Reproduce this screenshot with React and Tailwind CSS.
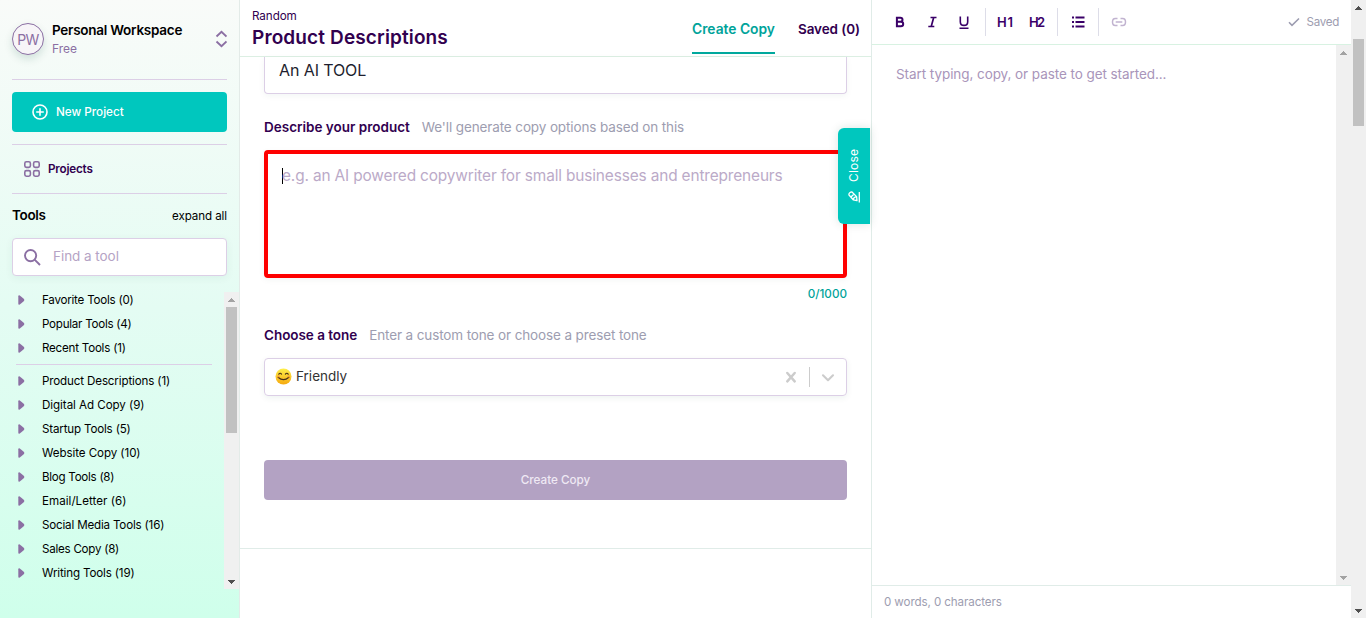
import React from "react";

const favorites = [
  ["Favorite Tools (0)", "pt-0.5 tracking-[-0.23px]"],
  ["Popular Tools (4)", "pt-0.5 tracking-[-0.25px]"],
  ["Recent Tools (1)", "pt-0.5 tracking-[-0.22px]"],
];

const categories = [
  ["Product Descriptions (1)", "pt-0.5 tracking-[-0.14px]"],
  ["Digital Ad Copy (9)", "pt-0.5 tracking-[-0.06px]"],
  ["Startup Tools (5)", "pt-0.5 tracking-[-0.17px]"],
  ["Website Copy (10)", "pt-0.5 tracking-[-0.08px]"],
  ["Blog Tools (8)", "pt-0.5 tracking-[-0.27px]"],
  ["Email/Letter (6)", "pt-0.5 tracking-[0.03px]"],
  ["Social Media Tools (16)", "pt-0.5 tracking-[-0.18px]"],
  ["Sales Copy (8)", "pt-0.5 tracking-[-0.25px]"],
  ["Writing Tools (19)", "pt-0.5 tracking-[-0.15px]"],
];

function ToolRow({ label, tracking }) {
  return (
    <li className="flex h-6 items-center pl-[18px] text-[11.6px] text-black">
      <svg className="mr-[17px] h-[10px] w-[7px]" viewBox="0 0 7 10">
        <path d="M0.3 1.2Q0.3 0 1.8 0.5L6 4Q6.6 5 6 6L1.8 9.5Q0.3 10 0.3 8.8Z" fill="#8b6fa3" />
      </svg>
      <span className={tracking}>{label}</span>
    </li>
  );
}

function Arrow({ up, color }) {
  return (
    <svg className="h-[15px] w-[15px] shrink-0" viewBox="0 0 15 15" shapeRendering="crispEdges">
      <path d={up ? "M4 10h7v-1h-1v-1h-1v-1h-1v-1h-1v1h-1v1h-1v1h-1z" : "M4 6h7v1h-1v1h-1v1h-1v1h-1v-1h-1v-1h-1v-1h-1z"} fill={color} />
    </svg>
  );
}

function Sidebar() {
  return (
    <aside className="flex w-60 shrink-0 flex-col border-r border-[#e3ebe8] bg-linear-to-b from-[#f9fbf9] via-[#e4fcf3] to-[#cfffeb]">
      <div className="mx-3 flex h-20 items-center border-b border-[#dccfe6] pb-px">
        <div className="flex h-8 w-8 items-center justify-center rounded-full border border-[#8b6fa3] bg-[#f7f5f8] text-[14px] tracking-[-0.5px] text-[#8b6fa3] shadow-[0_4px_8px_rgba(0,80,60,0.15)]">PW</div>
        <div className="ml-2 flex-1">
          <div className="text-[13.5px] leading-[18px] font-semibold tracking-[-0.25px] text-black">Personal Workspace</div>
          <div className="-mb-px pt-px text-[12px] leading-[18px] text-[#8b6fa3]">Free</div>
        </div>
        <svg className="h-[18px] w-3" viewBox="0 0 12 18" fill="none" stroke="#8b6fa3" strokeWidth="1.9">
          <path d="M1.5 6.5 6.500 1.9 11.500 6.5M1.5 11.5 6.500 16.1 11.500 11.5" />
        </svg>
      </div>
      <button className="mx-3 mt-3 flex h-10 items-center rounded bg-[#00c7be] pl-5 text-[11.7px] font-medium text-white">
        <svg className="mr-2 h-4 w-4" viewBox="0 0 16 16" fill="none" stroke="white" strokeWidth="1.6">
          <circle cx="8" cy="8" r="7" />
          <path d="M8 4.2v7.6M4.2 8h7.6" />
        </svg>
        <span className="pt-0.5">New Project</span>
      </button>
      <div className="mx-3 mt-3 flex h-[50px] items-center border-y border-[#dccfe6] pl-3 text-[11.7px] font-semibold tracking-[-0.2px] text-[#31004f]">
        <svg className="mr-2 h-4 w-4" viewBox="0 0 16 16" fill="none" stroke="#8b6fa3" strokeWidth="1.6">
          <rect x="0.8" y="0.8" width="5.6" height="5.6" rx="1.6" />
          <rect x="9.6" y="0.8" width="5.6" height="5.6" rx="1.6" />
          <rect x="0.8" y="9.6" width="5.6" height="5.6" rx="1.6" />
          <rect x="9.6" y="9.6" width="5.6" height="5.6" rx="1.6" />
        </svg>
        <span className="pt-0.5">Projects</span>
      </div>
      <div className="mx-3 flex h-11 items-center justify-between text-black">
        <span className="pb-0.5 text-[13.5px] font-semibold tracking-[-0.35px]">Tools</span>
        <span className="pt-0.5 text-[11.6px] tracking-[-0.1px]">expand all</span>
      </div>
      <div className="mx-3 flex h-[38px] shrink-0 items-center rounded border border-[#dccfe6] bg-white pl-[11px] text-[13.5px] tracking-[-0.05px] text-[#b5a3c5] shadow-[0_2px_8px_rgba(0,80,60,0.06)]">
        <svg className="mr-3 h-[17px] w-[17px]" viewBox="0 0 17 17" fill="none" stroke="#8b6fa3" strokeWidth="1.9">
          <circle cx="6.6" cy="6.6" r="5.6" />
          <path d="M10.6 10.6 16 16" />
        </svg>
        <span className="pb-0.5">Find a tool</span>
      </div>
      <div className="mt-4 flex h-[297px]">
        <div className="w-[224px] overflow-hidden">
          <ul className="-mt-1">
            <li><ul>{favorites.map(([l, t]) => <ToolRow key={l} label={l} tracking={t} />)}</ul></li>
            <li className="mt-1 mr-3 mb-1 ml-4 h-px bg-[#dccfe6]" />
            <li><ul>{categories.map(([l, t]) => <ToolRow key={l} label={l} tracking={t} />)}</ul></li>
          </ul>
        </div>
        <div className="flex w-[15px] flex-col justify-between bg-[#f0f0f0]">
          <Arrow up color="#a3a3a3" />
          <div className="mx-auto mb-auto h-[126px] w-[11px] bg-[#c1c1c1]" />
          <Arrow color="#505050" />
        </div>
      </div>
    </aside>
  );
}

function Main() {
  return (
    <main className="relative w-[632px] shrink-0 border-r border-[#e0ece8]">
      <header className="flex h-[57px] justify-between border-b border-[#dcefe3] px-3">
        <div className="pt-2 text-[#31004f]">
          <div className="text-[11.7px] leading-4 tracking-[-0.1px]">Random</div>
          <h1 className="text-[19px] leading-7 font-semibold tracking-[0.13px]">Product Descriptions</h1>
        </div>
        <nav className="flex h-[54px] gap-[23px] font-semibold">
          <div className="flex h-[54px] w-[83px] items-center border-b-2 border-[#00a89d] pt-1.5 text-[13.8px] text-[#00a39a]"><span className="whitespace-nowrap">Create Copy</span></div>
          <div className="flex h-[54px] w-[61px] items-center pt-1 text-[13.5px] tracking-[-0.1px] text-[#31004f]"><span className="whitespace-nowrap">Saved (0)</span></div>
        </nav>
      </header>
      <div className="flex h-[492px] flex-col border-b border-[#e0ece8] px-6">
        <div className="flex h-[37px] shrink-0 rounded-b border border-t-0 border-[#dccfe6] pl-[14px] text-[16px] leading-[27px] tracking-[-0.1px] text-[#1e1e2e] shadow-[0_2px_6px_rgba(0,80,60,0.05)]"><span>An AI TOOL</span></div>
        <div className="mt-[23px] flex h-5 items-center gap-3 text-[13.5px]">
          <span className="font-semibold text-[#31004f]">Describe your product</span>
          <span className="tracking-[-0.12px] text-[#9d9db0]">We'll generate copy options based on this</span>
        </div>
        <div className="mt-[13px] flex h-32 shrink-0 rounded border-4 border-[#fe0000] pt-3 pl-[14px] text-[15.4px] tracking-[-0.135px] text-[#bbaac8] shadow-[0_2px_6px_rgba(0,80,60,0.05)]">
          <span className="mt-0.5 -mr-px h-4 w-px bg-black" />
          <span className="h-6 leading-[19px]">e.g. an AI powered copywriter for small businesses and entrepreneurs</span>
        </div>
        <div className="mt-[9px] flex h-4 items-center justify-end text-[11.7px] font-medium text-[#00a39a]"><span>0/1000</span></div>
        <div className="mt-[22px] flex h-5 items-center gap-3 text-[13.5px]">
          <span className="font-semibold tracking-[-0.04px] text-[#31004f]">Choose a tone</span>
          <span className="tracking-[-0.125px] text-[#9d9db0]">Enter a custom tone or choose a preset tone</span>
        </div>
        <div className="mt-[13px] flex h-[38px] shrink-0 items-center rounded border border-[#dccfe6] pl-[10px] text-[13.5px] text-[#333] shadow-[0_2px_6px_rgba(0,80,60,0.07)]">
          <svg className="mr-1 mb-px h-[17px] w-[17px]" viewBox="0 0 17 17" fill="none" strokeLinecap="round">
            <defs>
              <linearGradient id="face" x1="0" y1="0" x2="0" y2="1">
                <stop offset="0" stopColor="#fff04b" />
                <stop offset="1" stopColor="#f5a90f" />
              </linearGradient>
            </defs>
            <circle cx="8.5" cy="8.5" r="8" fill="url(#face)" />
            <path d="M3.8 6.2Q5.2 4.4 6.5 6.1M10.4 6.1Q11.8 4.4 13.2 6.2M3.1 9.3Q8.5 14 13.9 9.3" stroke="#493018" strokeWidth="1.2" />
            <circle cx="3.3" cy="8.5" r="1.3" fill="#ff8b34" opacity=".5" />
            <circle cx="13.7" cy="8.5" r="1.3" fill="#ff8b34" opacity=".5" />
          </svg>
          <span className="flex-1 pb-0.5">Friendly</span>
          <svg className="h-5 w-5" viewBox="0 0 20 20" fill="none" stroke="#ccc" strokeWidth="2.5" strokeLinecap="round">
            <path d="M6.3 6 13.7 14.4M13.7 6 6.3 14.4" />
          </svg>
          <div className="mx-2 h-5 w-px bg-[#ccc]" />
          <svg className="mr-2 h-5 w-5" viewBox="0 0 20 20" fill="none" stroke="#ccc" strokeWidth="2.1" strokeLinecap="round" strokeLinejoin="round">
            <path d="m5 8.3 5 4.9 5-4.9" />
          </svg>
        </div>
        <button className="mt-16 flex h-10 shrink-0 items-center justify-center rounded bg-[#b3a2c3] text-[11.7px] font-medium text-[#efe9f4]"><span className="pt-0.5">Create Copy</span></button>
      </div>
      <button className="absolute top-32 left-[598px] flex h-24 w-8 flex-col items-center rounded-l-md bg-[#00c7be] text-white shadow-[0_0_10px_rgba(0,80,60,0.15)]">
        <span className="mt-5 flex h-[34px] w-4 rotate-180 items-center text-[12px] tracking-[0.2px] [writing-mode:vertical-rl]">Close</span>
        <svg className="mt-[9px] h-3 w-3" viewBox="0 0 12 12" fill="none" stroke="white" strokeWidth="1.3" strokeLinejoin="round">
          <path d="M1 4Q0.600 2.800 1.800 1.800T4 1L8.600 5.600 9 9.600 5.200 8.800ZM3.200 5.800 5.800 3.200M5.200 8.800Q5.400 6 8.600 5.600M11.300 1v10.500" />
        </svg>
      </button>
    </main>
  );
}

function Editor() {
  return (
    <section className="flex w-[479px] flex-col">
      <div className="flex h-[45px] shrink-0 items-center border-b border-[#d8f2e2] pr-3 text-[14px] text-[#31005f]">
        <svg className="h-[44px] w-[270px]" viewBox="0 0 270 44" fill="none" stroke="#3a0068" strokeWidth="1.8">
          <path d="M24.900 17.800h3.400q2.200 0 2.200 2t-2.200 2h-3.400zm0 4h3.900q2.400 0 2.400 2.200t-2.400 2.200h-3.900z" strokeWidth="2" />
          <path d="M58.500 17.500h6M56.300 26.500h6M61.700 17.500l-2.500 9" strokeWidth="1.700" />
          <path d="M88.300 16.500v5.200q0 3.700 3.700 3.700t3.700-3.700v-5.200M87.500 28.200h9" strokeWidth="1.600" />
          <path d="M113.500 8v28M185.500 8v28M226.500 8v28" stroke="#dddde8" strokeWidth="1" />
          <path d="M204.500 18h9M204.500 22.500h9M204.500 27h9" strokeWidth="1.800" transform="translate(-1 -.5)" />
          <path d="M200 17.500h2M200 22h2M200 26.500h2" strokeWidth="2" />
          <path d="M245.500 25.500h-2.200q-2.800 0-2.800-3.500t2.800-3.500h2.200M248.500 18.500h2.200q2.800 0 2.800 3.500t-2.800 3.500h-2.200M243.700 22h6.600" stroke="#c1b3d0" strokeWidth="1.500" />
          <g fill="#3a0068" stroke="none" fontSize="13" fontWeight="600">
            <text x="125" y="26.500" textLength="16">H1</text>
            <text x="157" y="26.500" textLength="16">H2</text>
          </g>
        </svg>
        <svg className="ml-auto h-3 w-3" viewBox="0 0 12 12" fill="none" stroke="#9c9cb0" strokeWidth="1.6"><path d="m1 6.300 3 3L11 2.500" /></svg>
        <span className="ml-[7px] pt-0.5 text-[11.6px] tracking-[-0.3px] text-[#9d9db0]">Saved</span>
      </div>
      <div className="flex h-[540px] shrink-0">
        <div className="flex-1 pt-[19px] pl-6 text-[13.5px] leading-5 tracking-[-0.07px] text-[#a995ba]"><span>Start typing, copy, or paste to get started...</span></div>
        <div className="flex w-[15px] flex-col justify-between bg-[#f0f0f0]">
          <Arrow up color="#a3a3a3" />
          <Arrow color="#a3a3a3" />
        </div>
      </div>
      <div className="flex h-[33px] items-center border-t border-[#e0ece8] pl-3 text-[11.6px] tracking-[-0.1px] text-[#9d9db0]"><span className="pt-0.5">0 words, 0 characters</span></div>
    </section>
  );
}

export default function App() {
  return (
    <div className="flex h-[618px] w-[1366px] overflow-hidden bg-white font-['Inter',sans-serif]">
      <Sidebar />
      <Main />
      <Editor />
      <div className="flex w-[15px] shrink-0 flex-col bg-[#f0f0f0]">
        <Arrow up color="#505050" />
        <div className="mx-auto mt-6 h-[87px] w-[11px] bg-[#c1c1c1]" />
        <div className="mt-auto"><Arrow color="#505050" /></div>
      </div>
    </div>
  );
}
